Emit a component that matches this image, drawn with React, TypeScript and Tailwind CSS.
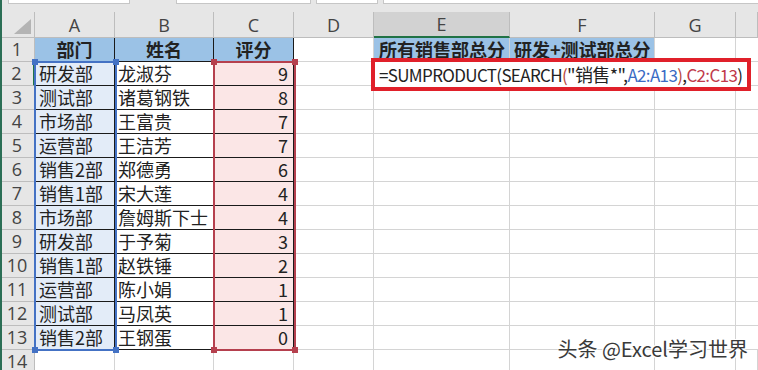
import React from 'react';

const COLS = ['A', 'B', 'C', 'D', 'E', 'F', 'G', ''];

const rows: [string, string, number][] = [
  ['研发部', '龙淑芬', 9],
  ['测试部', '诸葛钢铁', 8],
  ['市场部', '王富贵', 7],
  ['运营部', '王洁芳', 7],
  ['销售2部', '郑德勇', 6],
  ['销售1部', '宋大莲', 4],
  ['市场部', '詹姆斯下士', 4],
  ['研发部', '于予菊', 3],
  ['销售1部', '赵铁锤', 2],
  ['运营部', '陈小娟', 1],
  ['测试部', '马凤英', 1],
  ['销售2部', '王钢蛋', 0],
];

const font = { fontFamily: '"Noto Sans CJK SC", "Noto Sans", sans-serif' };

// corner handles of a coloured range
const Handles = ({ color }: { color: string }) => (
  <>
    <span className={`absolute -left-[4px] -top-[4px] w-[6px] h-[6px] ${color}`} />
    <span className={`absolute -right-[4px] -top-[4px] w-[6px] h-[6px] ${color}`} />
    <span className={`absolute -left-[4px] -bottom-[4px] w-[6px] h-[6px] ${color}`} />
    <span className={`absolute -right-[4px] -bottom-[4px] w-[6px] h-[6px] ${color}`} />
  </>
);

const App: React.FC = () => {
  const gridCols = 'grid grid-cols-[35px_80px_99px_80px_80px_136px_145px_81px_22px]';

  return (
    <div className="w-[758px] h-[370px] overflow-hidden bg-white relative text-[#222]" style={font}>
      {/* window edge */}
      <div className="absolute left-0 top-0 bottom-0 w-[2px] bg-[#2b6e55] z-30" />

      {/* remnants of formula bar */}
      <div className="flex h-[4px] bg-[#e6e6e6] gap-[5px] pl-[8px]">
        <div className="w-[122px] bg-white border-b border-x border-[#c6c6c6]" />
        <div className="w-[36px]" />
        <div className="w-[135px] bg-white border-b border-x border-[#c6c6c6]" />
        <div className="w-[62px] bg-white border-b border-x border-[#c6c6c6]" />
        <div className="flex-1 bg-white border-b border-l border-[#c6c6c6]" />
      </div>
      <div className="h-[8px] bg-[#e6e6e6]" />

      <div className="relative">
        {/* column headers */}
        <div className={`${gridCols} h-[26px] bg-[#e6e6e6] text-[#444] text-[18px]`}>
          <div className="relative border-r border-b border-[#bdbdbd]">
            <svg className="absolute right-[3px] bottom-[3px]" width="17" height="15" viewBox="0 0 17 15">
              <polygon points="17,0 17,15 0,15" fill="#b4b4b4" />
            </svg>
          </div>
          {COLS.map((c, i) => (
            <div
              key={i}
              className={`flex items-center justify-center leading-none border-r ${
                c === 'E'
                  ? 'bg-[#d2d2d2] border-b-2 border-b-[#217346] border-r-[#bdbdbd]'
                  : 'border-b border-[#bdbdbd]'
              }`}
              style={{ fontFamily: '"Open Sans", sans-serif' }}
            >
              {c}
            </div>
          ))}
        </div>

        {/* row 1 */}
        <div className={`${gridCols} h-[24px] text-[18px] leading-[23px]`}>
          <div className="bg-[#e6e6e6] text-[#444] text-center border-r border-b border-[#bdbdbd]" style={{ fontFamily: '"Open Sans", sans-serif' }}>
            1
          </div>
          {['部门', '姓名', '评分'].map(t => (
            <div key={t} className="bg-[#9bc2e6] font-bold text-center border-r border-b border-[#1a1a1a]">
              {t}
            </div>
          ))}
          <div className="border-r border-b border-[#d4d4d4]" />
          <div className="bg-[#9bc2e6] font-bold pl-[5px] whitespace-nowrap border-r border-b border-[#d4d4d4]">所有销售部总分</div>
          <div className="bg-[#9bc2e6] font-bold pl-[4px] whitespace-nowrap border-r border-b border-[#d4d4d4]">研发+测试部总分</div>
          <div className="border-r border-b border-[#d4d4d4]" />
          <div className="border-b border-[#d4d4d4]" />
        </div>

        {/* data rows */}
        {rows.map(([dept, name, score], i) => (
          <div key={i} className={`${gridCols} h-[24px] text-[18px] leading-[23px]`}>
            <div
              className={`bg-[#e6e6e6] text-[#444] text-center border-b border-[#bdbdbd] ${
                i === 0 ? 'border-r-2 border-r-[#217346]' : 'border-r'
              }`}
              style={{ fontFamily: '"Open Sans", sans-serif' }}
            >
              {i + 2}
            </div>
            <div className="bg-[#e3ecf8] pl-[4px] whitespace-nowrap border-r border-b border-[#1a1a1a]">{dept}</div>
            <div className="pl-[3px] whitespace-nowrap border-r border-b border-[#1a1a1a]">{name}</div>
            <div className="bg-[#fbe6e6] text-right pr-[5px] border-r border-b border-[#1a1a1a]">{score}</div>
            <div className="border-r border-b border-[#d4d4d4]" />
            <div className="border-r border-b border-[#d4d4d4]" />
            <div className="border-r border-b border-[#d4d4d4]" />
            <div className="border-r border-b border-[#d4d4d4]" />
            <div className="border-b border-[#d4d4d4]" />
          </div>
        ))}

        {/* row 14 */}
        <div className={`${gridCols} h-[24px] text-[18px] leading-[23px]`}>
          <div className="bg-[#e6e6e6] text-[#444] text-center border-r border-b border-[#bdbdbd]" style={{ fontFamily: '"Open Sans", sans-serif' }}>
            14
          </div>
          {COLS.map((_, i) => (
            <div key={i} className="border-r border-b border-[#d4d4d4]" />
          ))}
        </div>

        {/* coloured range A2:A13 */}
        <div className="absolute left-[34px] top-[49px] w-[83px] h-[290px] border-2 border-[#4472c4] pointer-events-none">
          <Handles color="bg-[#4472c4]" />
        </div>
        {/* coloured range C2:C13 */}
        <div className="absolute left-[213px] top-[49px] w-[83px] h-[290px] border-2 border-[#b5404e] pointer-events-none">
          <Handles color="bg-[#b5404e]" />
        </div>

        {/* formula being edited in E2 */}
        <div className="absolute left-[371px] top-[46px] w-[380px] h-[33px] border-4 border-[#e0202a] bg-white flex items-center pl-[4px] text-[17px] whitespace-nowrap tracking-[-0.65px]">
          <span>=SUMPRODUCT(SEARCH</span>
          <span className="text-[#b8463a]">(</span>
          <span className="text-[18px]">"销售*",</span>
          <span className="text-[#3a6bc4]">A2:A13</span>
          <span className="text-[#b8463a]">)</span>
          <span>,</span>
          <span className="text-[#c0394a]">C2:C13</span>
          <span>)</span>
        </div>
      </div>

      {/* watermark */}
      <div
        className="absolute right-[10px] bottom-[6px] text-[20px] text-[#3a3a3a] whitespace-nowrap"
        style={{ textShadow: '1px 1px 0 #fff, -1px -1px 0 #fff, 1px -1px 0 #fff, -1px 1px 0 #fff' }}
      >
        头条 @Excel学习世界
      </div>
    </div>
  );
};

export default App;
